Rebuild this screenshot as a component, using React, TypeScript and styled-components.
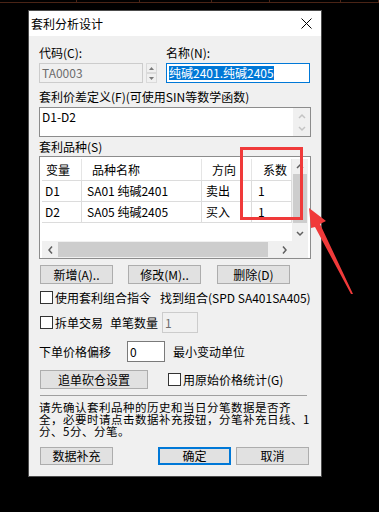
import styled, { createGlobalStyle } from 'styled-components';

const GlobalStyle = createGlobalStyle`
  html, body {
    margin: 0;
    padding: 0;
    background: #000;
  }
  body {
    font-family: "Noto Sans CJK SC", "Noto Sans", sans-serif;
    font-size: 12px;
    color: #000;
  }
  * {
    box-sizing: border-box;
  }
`;

const Page = styled.div`
  position: relative;
  width: 379px;
  height: 512px;
  overflow: hidden;
  background: #000;
`;

const TopStrip = styled.div`
  display: flex;
  height: 3px;
  border-bottom: 1px solid #4a2416;
`;

const StripCell = styled.div<{ $w?: number }>`
  flex: ${(p) => (p.$w ? `0 0 ${p.$w}px` : '1')};
  border-right: 1px solid #4a2416;
`;

const Dialog = styled.div`
  margin: 7px 0 0 28px;
  width: 294px;
  height: 467px;
  background: #f0f0f0;
  border: 1px solid #4d4d4d;
  display: flex;
  flex-direction: column;
`;

const TitleBar = styled.div`
  height: 25px;
  flex: 0 0 25px;
  background: #fff;
  display: flex;
  align-items: center;
  justify-content: space-between;
  padding-left: 2px;
  line-height: 14px;
`;

const CloseBox = styled.div`
  width: 30px;
  height: 25px;
  display: flex;
  align-items: center;
  justify-content: center;
`;

const Body = styled.div`
  padding: 0 10px;
  display: flex;
  flex-direction: column;
  line-height: 14px;
`;

const Row = styled.div<{ $top: number; $h?: number }>`
  display: flex;
  align-items: center;
  margin-top: ${(p) => p.$top}px;
  height: ${(p) => (p.$h ? `${p.$h}px` : 'auto')};
  white-space: nowrap;
`;

const Text = styled.span<{ $ml?: number; $w?: number }>`
  margin-left: ${(p) => p.$ml ?? 0}px;
  width: ${(p) => (p.$w ? `${p.$w}px` : 'auto')};
  white-space: nowrap;
`;

const Field = styled.div<{ $w: number; $ml?: number; $disabled?: boolean; $border?: string }>`
  width: ${(p) => p.$w}px;
  height: 100%;
  margin-left: ${(p) => p.$ml ?? 0}px;
  border: 1px solid ${(p) => p.$border ?? (p.$disabled ? '#cccccc' : '#7a7a7a')};
  background: ${(p) => (p.$disabled ? '#f0f0f0' : '#fff')};
  color: ${(p) => (p.$disabled ? '#6d6d6d' : '#000')};
  padding-left: 2px;
  display: flex;
  align-items: center;
  overflow: hidden;
`;

const Selected = styled.span`
  background: #0078d7;
  color: #fff;
  line-height: 14px;
`;

const Spin = styled.div`
  width: 11px;
  height: 100%;
  margin-left: 3px;
  display: flex;
  flex-direction: column;
`;

const SpinHalf = styled.div`
  flex: 1;
  border: 1px solid #dadada;
  background: #f0f0f0;
  display: flex;
  align-items: center;
  justify-content: center;
`;

const Memo = styled.div`
  margin-top: 3px;
  height: 30px;
  border: 1px solid #8c8c8c;
  background: #fff;
  display: flex;
`;

const MemoText = styled.div`
  flex: 1;
  padding: 2px 0 0 2px;
`;

const ScrollBar = styled.div<{ $dir: 'v' | 'h' }>`
  display: flex;
  flex-direction: ${(p) => (p.$dir === 'v' ? 'column' : 'row')};
  background: #f0f0f0;
`;

const MemoScroll = styled(ScrollBar)`
  width: 17px;
  justify-content: space-around;
  align-items: center;
  padding: 2px 0;
`;

const ListView = styled.div`
  margin-top: 2px;
  height: 103px;
  border: 1px solid #8c8c8c;
  background: #fff;
  padding: 2px 2px 0 2px;
  display: grid;
  grid-template-columns: 250px 16px;
  grid-template-rows: 82px 17px;
`;

const Table = styled.div`
  overflow: hidden;
  display: flex;
  flex-direction: column;
`;

const TRow = styled.div<{ $head?: boolean }>`
  display: flex;
  height: ${(p) => (p.$head ? 22 : 21)}px;
  flex: 0 0 auto;
  border-bottom: 1px solid #dcdcdc;
`;

const Cell = styled.div<{ $w: number; $pad: number; $head?: boolean }>`
  flex: 0 0 ${(p) => p.$w}px;
  padding-left: ${(p) => p.$pad}px;
  display: flex;
  align-items: center;
  border-right: 1px solid ${(p) => (p.$head ? '#e5e5e5' : '#dcdcdc')};
  white-space: nowrap;
  overflow: hidden;
`;

const ArrowBox = styled.div<{ $size: number }>`
  flex: 0 0 ${(p) => p.$size}px;
  display: flex;
  align-items: center;
  justify-content: center;
`;

const Track = styled.div<{ $dir: 'v' | 'h' }>`
  flex: 1;
  display: flex;
  flex-direction: ${(p) => (p.$dir === 'v' ? 'column' : 'row')};
  padding: ${(p) => (p.$dir === 'v' ? '0 1px' : '1px 0')};
`;

const Thumb = styled.div<{ $len: number; $dir: 'v' | 'h' }>`
  background: #cdcdcd;
  ${(p) => (p.$dir === 'v' ? `height: ${p.$len}px;` : `width: ${p.$len}px;`)}
`;

const Corner = styled.div`
  background: #f0f0f0;
`;

const Button = styled.div<{ $w: number; $h?: number; $ml?: number; $default?: boolean }>`
  width: ${(p) => p.$w}px;
  height: ${(p) => p.$h ?? 19}px;
  margin-left: ${(p) => p.$ml ?? 0}px;
  background: #e1e1e1;
  border: ${(p) => (p.$default ? '2px solid #0078d7' : '1px solid #adadad')};
  display: flex;
  align-items: center;
  justify-content: center;
  white-space: nowrap;
`;

const CheckBox = styled.div<{ $ml?: number }>`
  width: 13px;
  height: 13px;
  flex: 0 0 13px;
  margin-left: ${(p) => p.$ml ?? 1}px;
  background: #fff;
  border: 1px solid #333;
`;

const Separator = styled.div`
  margin: 6px 4px 0 1px;
  height: 1px;
  background: #a0a0a0;
`;

const Info = styled.div`
  margin-top: 5px;
  display: flex;
  flex-direction: column;
`;

const InfoLine = styled.div`
  height: 12px;
  font-size: 11.5px;
  line-height: 12px;
  letter-spacing: 0.5px;
  white-space: nowrap;
`;

const Spacer = styled.div`
  flex: 1;
`;

const Overlay = styled.svg`
  position: absolute;
  left: 0;
  top: 0;
  pointer-events: none;
`;

const Chevron = ({ dir, color = '#606060' }: { dir: 'up' | 'down' | 'left' | 'right'; color?: string }) => {
  const d = {
    up: 'M1 5 L4 2 L7 5',
    down: 'M1 2 L4 5 L7 2',
    left: 'M5 0.5 L2 4 L5 7.5',
    right: 'M2 0.5 L5 4 L2 7.5',
  }[dir];
  const vert = dir === 'up' || dir === 'down';
  return (
    <svg width={vert ? 8 : 7} height={vert ? 7 : 8} viewBox={vert ? '0 0 8 7' : '0 0 7 8'}>
      <path d={d} fill="none" stroke={color} strokeWidth="1.5" />
    </svg>
  );
};

const Tri = ({ up }: { up?: boolean }) => (
  <svg width="5" height="3" viewBox="0 0 5 3">
    <path d={up ? 'M0 3 L2.5 0 L5 3 Z' : 'M0 0 L2.5 3 L5 0 Z'} fill="#7a7a7a" />
  </svg>
);

const columns = [
  { title: '变量', w: 40, head: 4, pad: 3 },
  { title: '品种名称', w: 120, head: 10, pad: 5 },
  { title: '方向', w: 50, head: 10, pad: 4 },
  { title: '系数', w: 40, head: 11, pad: 6 },
];

const rows = [
  ['D1', 'SA01 纯碱2401', '卖出', '1'],
  ['D2', 'SA05 纯碱2405', '买入', '1'],
];

const infoLines = [
  '请先确认套利品种的历史和当日分笔数据是否齐',
  '全，必要时请点击数据补充按钮，分笔补充日线、1',
  '分、5分、分笔。',
];

export default function App() {
  return (
    <Page>
      <GlobalStyle />
      <TopStrip>
        <StripCell $w={77} />
        <StripCell $w={63} />
        <StripCell $w={72} />
        <StripCell $w={58} />
        <StripCell $w={71} />
        <StripCell />
      </TopStrip>

      <Dialog>
        <TitleBar>
          <span>套利分析设计</span>
          <CloseBox>
            <svg width="11" height="11" viewBox="0 0 11 11">
              <path d="M0.5 0.5 L10.5 10.5 M10.5 0.5 L0.5 10.5" stroke="#000" strokeWidth="1" />
            </svg>
          </CloseBox>
        </TitleBar>

        <Body>
          <Row $top={10} $h={14}>
            <Text $w={127}>代码(C):</Text>
            <Text>名称(N):</Text>
          </Row>
          <Row $top={3} $h={20}>
            <Field $w={104} $disabled>TA0003</Field>
            <Spin>
              <SpinHalf><Tri up /></SpinHalf>
              <SpinHalf><Tri /></SpinHalf>
            </Spin>
            <Field $w={144} $ml={9} $border="#0078d7">
              <Selected>纯碱2401.纯碱2405</Selected>
            </Field>
          </Row>

          <Row $top={7} $h={14}>
            <Text>套利价差定义(F)(可使用SIN等数学函数)</Text>
          </Row>
          <Memo>
            <MemoText>D1-D2</MemoText>
            <MemoScroll $dir="v">
              <Chevron dir="up" color="#c4c4c4" />
              <Chevron dir="down" color="#c4c4c4" />
            </MemoScroll>
          </Memo>

          <Row $top={3} $h={14}>
            <Text>套利品种(S)</Text>
          </Row>
          <ListView>
            <Table>
              <TRow $head>
                {columns.map((c) => (
                  <Cell key={c.title} $w={c.w} $pad={c.head} $head>
                    {c.title}
                  </Cell>
                ))}
              </TRow>
              {rows.map((r) => (
                <TRow key={r[0]}>
                  {r.map((v, i) => (
                    <Cell key={i} $w={columns[i].w} $pad={columns[i].pad}>
                      {v}
                    </Cell>
                  ))}
                </TRow>
              ))}
            </Table>
            <ScrollBar $dir="v">
              <ArrowBox $size={15}><Chevron dir="up" /></ArrowBox>
              <Track $dir="v"><Thumb $dir="v" $len={49} /></Track>
              <ArrowBox $size={15}><Chevron dir="down" /></ArrowBox>
            </ScrollBar>
            <ScrollBar $dir="h">
              <ArrowBox $size={16}><Chevron dir="left" /></ArrowBox>
              <Track $dir="h"><Thumb $dir="h" $len={210} /></Track>
              <ArrowBox $size={16}><Chevron dir="right" /></ArrowBox>
            </ScrollBar>
            <Corner />
          </ListView>

          <Row $top={6} $h={19}>
            <Button $w={73} $ml={1}>新增(A)..</Button>
            <Button $w={73} $ml={15}>修改(M)..</Button>
            <Button $w={73} $ml={16}>删除(D)</Button>
          </Row>

          <Row $top={6} $h={15}>
            <CheckBox />
            <Text $ml={2}>使用套利组合指令</Text>
            <Text $ml={9}>找到组合(SPD SA401SA405)</Text>
          </Row>

          <Row $top={7} $h={21}>
            <CheckBox />
            <Text $ml={2}>拆单交易</Text>
            <Text $ml={7}>单笔数量</Text>
            <Field $w={36} $ml={4} $disabled>1</Field>
          </Row>

          <Row $top={8} $h={21}>
            <Text>下单价格偏移</Text>
            <Field $w={38} $ml={16}>0</Field>
            <Text $ml={8}>最小变动单位</Text>
          </Row>

          <Row $top={8} $h={19}>
            <Button $w={108} $ml={1}>追单砍仓设置</Button>
            <CheckBox $ml={20} />
            <Text $ml={2}>用原始价格统计(G)</Text>
          </Row>

          <Separator />

          <Info>
            {infoLines.map((l) => (
              <InfoLine key={l}>{l}</InfoLine>
            ))}
          </Info>

          <Row $top={10} $h={18}>
            <Button $w={73} $h={18} $ml={1}>数据补充</Button>
            <Spacer />
            <Button $w={73} $h={18} $default>确定</Button>
            <Button $w={73} $h={18} $ml={5}>取消</Button>
            <Text $w={2} />
          </Row>
        </Body>
      </Dialog>

      <Overlay width="379" height="512" viewBox="0 0 379 512">
        <rect x="241.5" y="148.5" width="60" height="70" fill="none" stroke="#f03a3a" strokeWidth="3" />
        <polygon
          points="309,208 326,221 320,224 353,294 351,294 315,227 311,228"
          fill="#f03a3a"
        />
      </Overlay>
    </Page>
  );
}
